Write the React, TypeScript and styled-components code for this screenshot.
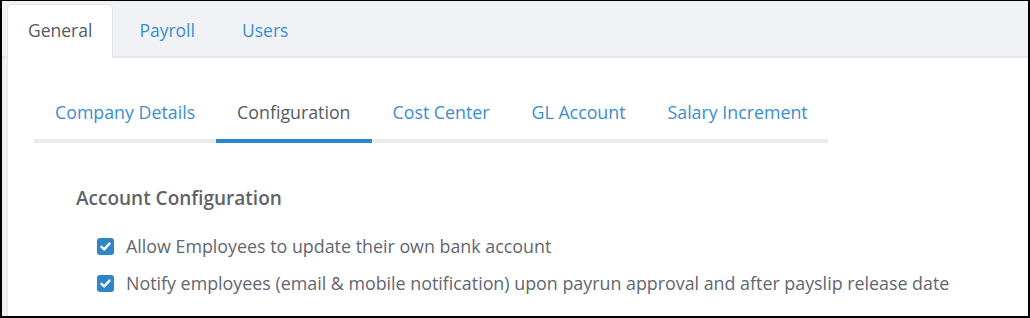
import React from "react";
import styled, { createGlobalStyle } from "styled-components";

const Global = createGlobalStyle`
  html, body { margin: 0; padding: 0; background: #fff; }
  body { font-family: "Open Sans", "Noto Sans", sans-serif; }
  * { box-sizing: border-box; }
`;

const Frame = styled.div`
  width: 1030px;
  height: 318px;
  border: 2px solid #000;
  border-top-width: 1px;
  background: #eef0f4;
  display: flex;
  flex-direction: column;
  overflow: hidden;
`;

const TopBar = styled.div`
  display: flex;
  align-items: flex-end;
  height: 57px;
  padding: 3px 0 0 5px;
  background: #f0f2f6;
  border-bottom: 2px solid #e3e5e8;
`;

const TopTab = styled.div<{ $active?: boolean }>`
  height: 54px;
  margin-bottom: -2px;
  padding: 0 20px 4px;
  display: flex;
  align-items: center;
  font-size: 17.5px;
  line-height: 24px;
  white-space: nowrap;
  color: ${(p) => (p.$active ? "#555a60" : "#3a8ed0")};
  background: ${(p) => (p.$active ? "#fff" : "transparent")};
  border: 1px solid ${(p) => (p.$active ? "#e3e5e8" : "transparent")};
  border-bottom: none;
  border-radius: 5px 5px 0 0;
  margin-right: 5px;
`;

const Panel = styled.div`
  flex: 1;
  margin-left: 5px;
  background: #fff;
  border-left: 1px solid #e6e7ec;
  padding: 28px 0 0 26px;
`;

const SubNav = styled.div`
  display: flex;
  width: 794px;
  border-bottom: 4px solid #ebebeb;
`;

const SubTab = styled.div<{ $active?: boolean }>`
  flex-shrink: 0;
  white-space: nowrap;
  padding: 14px 21px 15px;
  margin-bottom: -4px;
  font-size: 17.8px;
  line-height: 24px;
  color: ${(p) => (p.$active ? "#555a60" : "#3a8ed0")};
  border-bottom: 4px solid ${(p) => (p.$active ? "#2a88cb" : "transparent")};
`;

const Section = styled.div`
  padding: 43px 0 0 42px;
`;

const Heading = styled.div`
  font-size: 19px;
  line-height: 24px;
  font-weight: 600;
  color: #5f6368;
  margin-bottom: 24px;
`;

const Options = styled.div`
  display: flex;
  flex-direction: column;
  gap: 13px;
  padding-left: 21px;
`;

const Option = styled.label`
  display: flex;
  align-items: center;
  gap: 12px;
  white-space: nowrap;
  font-size: 17.85px;
  line-height: 24px;
  color: #5f6670;
`;

const Box = styled.span`
  width: 17px;
  height: 17px;
  border-radius: 3px;
  background: #2e86c9;
  display: inline-flex;
  align-items: center;
  justify-content: center;
  flex-shrink: 0;
`;

const Check = () => (
  <Box>
    <svg width="13" height="13" viewBox="0 0 13 13">
      <path d="M2.5 6.8 L5.2 9.4 L10.5 3.6" fill="none" stroke="#fff" strokeWidth="2.4" strokeLinecap="round" strokeLinejoin="round" />
    </svg>
  </Box>
);

export default function App() {
  return (
    <>
      <Global />
      <Frame>
        <TopBar>
          <TopTab $active>General</TopTab>
          <TopTab>Payroll</TopTab>
          <TopTab>Users</TopTab>
        </TopBar>
        <Panel>
          <SubNav>
            <SubTab>Company Details</SubTab>
            <SubTab $active>Configuration</SubTab>
            <SubTab>Cost Center</SubTab>
            <SubTab>GL Account</SubTab>
            <SubTab>Salary Increment</SubTab>
          </SubNav>
          <Section>
            <Heading>Account Configuration</Heading>
            <Options>
              <Option>
                <Check />
                Allow Employees to update their own bank account
              </Option>
              <Option>
                <Check />
                Notify employees (email &amp; mobile notification) upon payrun approval and after payslip release date
              </Option>
            </Options>
          </Section>
        </Panel>
      </Frame>
    </>
  );
}
